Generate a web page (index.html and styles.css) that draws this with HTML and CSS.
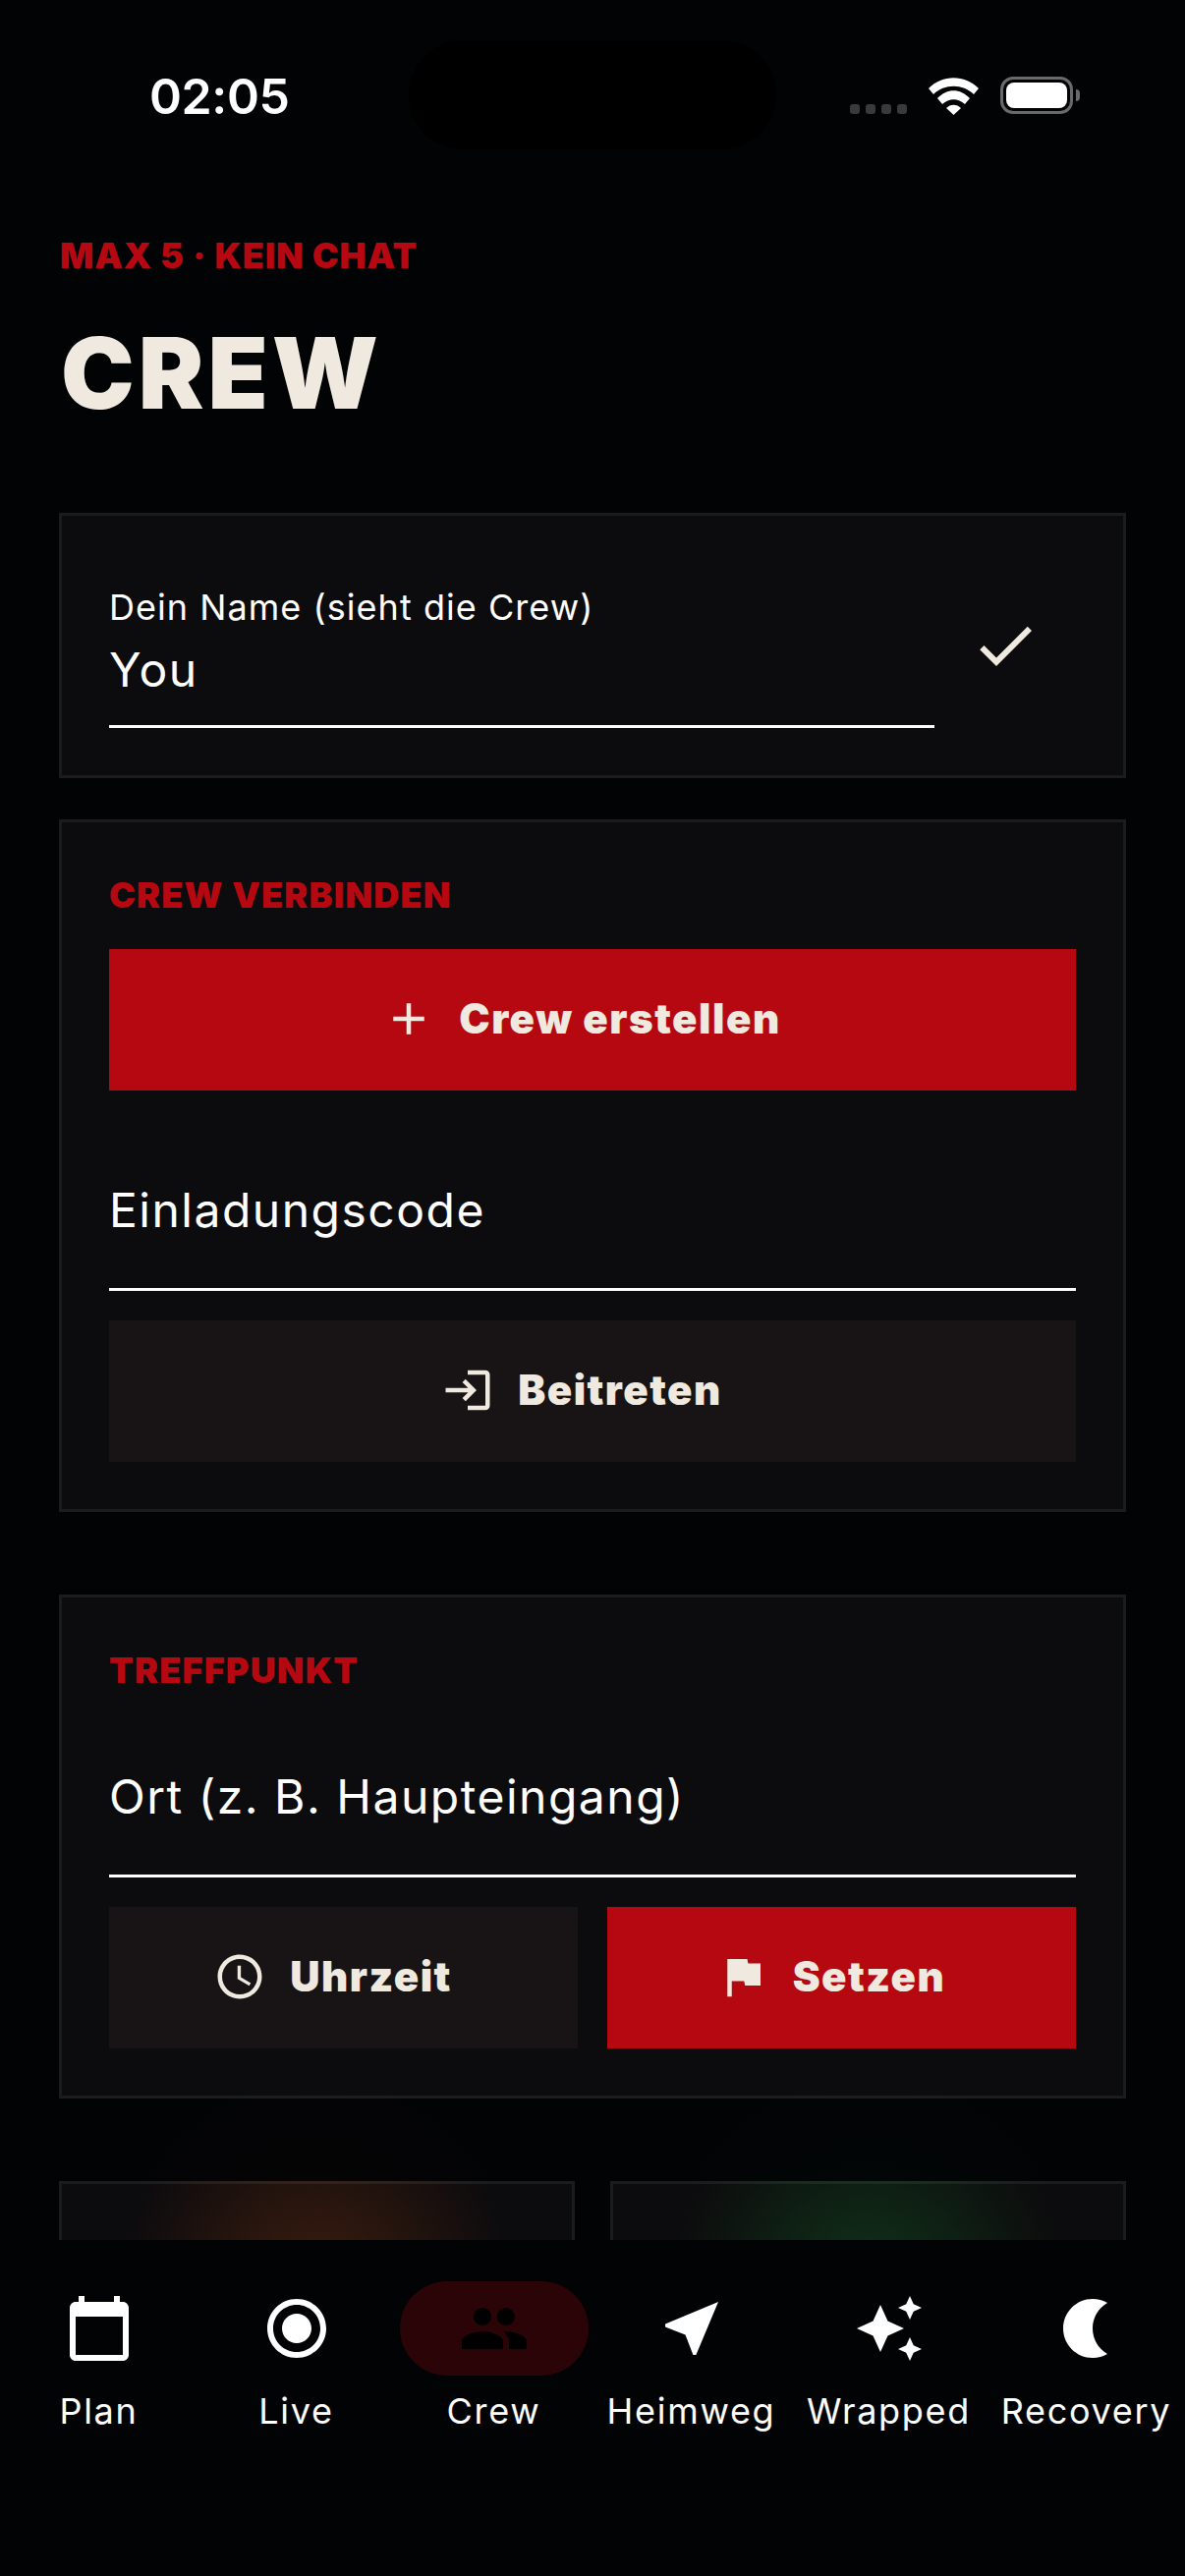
FILE: index.html
```html
<!DOCTYPE html>
<html lang="de">
<head>
    <meta charset="UTF-8">
    <meta name="viewport" content="width=device-width, initial-scale=1.0">
    <title>Crew</title>
    <link rel="stylesheet" href="styles.css">
</head>
<body>
    <div class="status-bar">
        <div class="status-time">02:05</div>
        <div class="status-island"></div>
        <div class="status-icons">
            <div class="signal"><span></span><span></span><span></span><span></span></div>
            <svg class="wifi" width="51" height="38" viewBox="0 0 51 38">
                <path d="M0 11C14-3.5 37-3.5 51 11L46 17C35 6 16 6 5 17Z"/>
                <path d="M9 21C19 10.500 32 10.500 42 21L37 27C30 20.500 21 20.500 14 27Z"/>
                <path d="M18 31C22 26.500 29 26.500 33 31L25.500 38Z"/>
            </svg>
            <div class="battery"><div class="battery-fill"></div></div>
            <div class="battery-tip"></div>
        </div>
    </div>

    <main class="content">
        <header class="page-header">
            <div class="eyebrow">MAX 5 · KEIN CHAT</div>
            <h1>CREW</h1>
        </header>

        <section class="card name-card">
            <div class="field field-filled">
                <label>Dein Name (sieht die Crew)</label>
                <div class="field-value">You</div>
            </div>
            <div class="icon-button">
                <svg width="72" height="72" viewBox="0 0 24 24"><path d="M9 16.170L4.830 12l-1.420 1.410L9 19 21 7l-1.410-1.410z"/></svg>
            </div>
        </section>

        <section class="card connect-card">
            <div class="card-title">CREW VERBINDEN</div>
            <button class="btn btn-primary">
                <svg width="54" height="54" viewBox="0 0 24 24"><path d="M19 13h-6v6h-2v-6H5v-2h6V5h2v6h6v2z"/></svg>
                Crew erstellen
            </button>
            <div class="field invite-field">
                <div class="field-value">Einladungscode</div>
            </div>
            <button class="btn btn-dark">
                <svg width="54" height="54" viewBox="0 0 24 24"><path d="M11 7L9.600 8.400l2.600 2.600H2v2h10.200l-2.600 2.600L11 17l5-5-5-5zm9 12h-8v2h8c1.100 0 2-.9 2-2V5c0-1.100-.9-2-2-2h-8v2h8v14z"/></svg>
                Beitreten
            </button>
        </section>

        <section class="card meet-card">
            <div class="card-title">TREFFPUNKT</div>
            <div class="field">
                <div class="field-value">Ort (z. B. Haupteingang)</div>
            </div>
            <div class="btn-row">
                <button class="btn btn-dark">
                    <svg width="54" height="54" viewBox="0 0 24 24"><path d="M11.990 2C6.470 2 2 6.480 2 12s4.470 10 9.990 10C17.520 22 22 17.520 22 12S17.520 2 11.990 2zM12 20c-4.420 0-8-3.580-8-8s3.580-8 8-8 8 3.580 8 8-3.580 8-8 8zm.5-13H11v6l5.250 3.150.75-1.230-4.500-2.670z"/></svg>
                    Uhrzeit
                </button>
                <button class="btn btn-primary">
                    <svg width="54" height="54" viewBox="0 0 24 24"><path d="M14.400 6L14 4H5v17h2v-7h5.600l.4 2h7V6z"/></svg>
                    Setzen
                </button>
            </div>
        </section>

        <div class="stat-row">
            <div class="card stat-card glow-orange"></div>
            <div class="card stat-card glow-green"></div>
        </div>
    </main>

    <nav class="tabs">
        <div class="tab">
            <div class="tab-icon"><svg width="72" height="72" viewBox="0 0 24 24"><path d="M20 3h-1V1h-2v2H7V1H5v2H4c-1.100 0-2 .9-2 2v16c0 1.100.9 2 2 2h16c1.100 0 2-.9 2-2V5c0-1.100-.9-2-2-2zm0 18H4V8h16v13z"/></svg></div>
            <span>Plan</span>
        </div>
        <div class="tab">
            <div class="tab-icon"><svg width="72" height="72" viewBox="0 0 24 24"><path d="M12 7c-2.760 0-5 2.240-5 5s2.240 5 5 5 5-2.240 5-5-2.240-5-5-5zm0-5C6.480 2 2 6.480 2 12s4.480 10 10 10 10-4.480 10-10S17.520 2 12 2zm0 18c-4.420 0-8-3.580-8-8s3.580-8 8-8 8 3.580 8 8-3.580 8-8 8z"/></svg></div>
            <span>Live</span>
        </div>
        <div class="tab active">
            <div class="tab-icon"><svg width="72" height="72" viewBox="0 0 24 24"><path d="M16 11c1.660 0 2.990-1.340 2.990-3S17.660 5 16 5c-1.660 0-3 1.340-3 3s1.340 3 3 3zm-8 0c1.660 0 2.990-1.340 2.990-3S9.660 5 8 5C6.340 5 5 6.340 5 8s1.340 3 3 3zm0 2c-2.330 0-7 1.170-7 3.500V19h14v-2.500c0-2.330-4.670-3.500-7-3.500zm8 0c-.29 0-.62.020-.97.050 1.160.84 1.970 1.970 1.970 3.450V19h6v-2.500c0-2.330-4.670-3.500-7-3.500z"/></svg></div>
            <span>Crew</span>
        </div>
        <div class="tab">
            <div class="tab-icon"><svg width="72" height="72" viewBox="0 0 24 24"><path d="M21 3L3 10.530v.98l6.840 2.650L12.480 21h.98L21 3z"/></svg></div>
            <span>Heimweg</span>
        </div>
        <div class="tab">
            <div class="tab-icon"><svg width="72" height="72" viewBox="0 0 24 24"><path d="M19 9l1.250-2.750L23 5l-2.750-1.250L19 1l-1.250 2.750L15 5l2.750 1.250L19 9zm-7.500.5L9 4 6.500 9.500 1 12l5.500 2.500L9 20l2.500-5.500L17 12l-5.500-2.500zM19 15l-1.250 2.750L15 19l2.750 1.250L19 23l1.250-2.750L23 19l-2.750-1.250L19 15z"/></svg></div>
            <span>Wrapped</span>
        </div>
        <div class="tab">
            <div class="tab-icon"><svg width="72" height="72" viewBox="0 0 24 24"><path d="M14 2c1.820 0 3.530.5 5 1.350C16.010 5.080 14 8.300 14 12s2.010 6.920 5 8.650C17.530 21.500 15.820 22 14 22 8.480 22 4 17.520 4 12S8.480 2 14 2z"/></svg></div>
            <span>Recovery</span>
        </div>
    </nav>
</body>
</html>
```
FILE: styles.css
```css
:root {
    --bg: #020305;
    --card-bg: #0c0b0d;
    --card-border: #1c1c1e;
    --dark-btn: #181315;
    --red: #b50811;
    --cream: #efe9df;
    --pill: #2b0408;
}

* {
    margin: 0;
    padding: 0;
    box-sizing: border-box;
}

body {
    width: 1206px;
    height: 2622px;
    overflow: hidden;
    background-color: var(--bg);
    color: white;
    font-family: Inter, "Liberation Sans", sans-serif;
}

/* status bar */
.status-bar {
    display: flex;
    height: 200px;
    padding-top: 41px;
}

.status-time {
    width: 416px;
    padding-left: 152px;
    padding-top: 27px;
    font-size: 50px;
    line-height: 60px;
    font-weight: 600;
    letter-spacing: -0.4px;
}

.status-island {
    width: 374px;
    height: 111px;
    background-color: #000;
    border-radius: 56px;
}

.status-icons {
    display: flex;
    align-items: flex-start;
    margin-left: 75px;
    padding-top: 37px;
}

.signal {
    display: flex;
    gap: 6px;
    margin-top: 28px;
}

.signal span {
    width: 10px;
    height: 10px;
    border-radius: 3px;
    background-color: #3a3a3c;
}

.wifi {
    margin-left: 22px;
    margin-top: 1px;
    fill: white;
}

.battery {
    width: 74px;
    height: 38px;
    margin-left: 22px;
    padding: 3px;
    border: 3px solid #6a6a6c;
    border-radius: 13px;
}

.battery-fill {
    height: 100%;
    background-color: white;
    border-radius: 8px;
}

.battery-tip {
    width: 4px;
    height: 12px;
    margin-left: 3px;
    margin-top: 13px;
    background-color: #6a6a6c;
    border-radius: 0 4px 4px 0;
}

/* content */
.content {
    height: 2080px;
    padding: 34px 60px 0;
    overflow: hidden;
}

.page-header {
    height: 288px;
}

.eyebrow {
    font-size: 36px;
    line-height: 52px;
    font-weight: 900;
    color: var(--red);
    letter-spacing: 0.9px;
    padding-left: 1px;
}

h1 {
    margin-top: 34px;
    font-size: 100px;
    line-height: 120px;
    font-weight: 900;
    color: var(--cream);
    letter-spacing: 4px;
    padding-left: 2px;
}

.card {
    background-color: var(--card-bg);
    border: 3px solid var(--card-border);
    padding: 48px;
}

.name-card {
    display: flex;
    margin-bottom: 42px;
}

.connect-card {
    margin-bottom: 84px;
}

.meet-card {
    margin-bottom: 84px;
}

.card-title {
    font-size: 36px;
    line-height: 52px;
    font-weight: 900;
    color: var(--red);
    letter-spacing: 1.2px;
}

.connect-card .card-title {
    margin-bottom: 29px;
}

.meet-card .card-title {
    margin-bottom: 17px;
}

.field {
    display: flex;
    flex-direction: column;
    justify-content: center;
    height: 168px;
    padding-top: 6px;
    border-bottom: 3px solid white;
}

.field-value {
    font-size: 48px;
    line-height: 60px;
    letter-spacing: 1.5px;
}

.field-filled {
    flex: 1;
    justify-content: flex-start;
    padding-top: 21px;
}

.field-filled label {
    font-size: 36px;
    line-height: 48px;
    letter-spacing: 1.05px;
    margin-bottom: 10px;
}

.invite-field {
    margin-top: 36px;
}

.icon-button {
    display: flex;
    align-items: center;
    justify-content: center;
    width: 144px;
    height: 168px;
}

.icon-button svg {
    fill: var(--cream);
}

.btn {
    display: flex;
    align-items: center;
    justify-content: center;
    gap: 24px;
    width: 100%;
    height: 144px;
    padding: 0 22px 3px 0;
    border: none;
    font-family: inherit;
    font-size: 42px;
    font-weight: 900;
    letter-spacing: 1.5px;
    color: var(--cream);
}

.btn svg {
    fill: var(--cream);
}

.btn-primary {
    background-color: var(--red);
}

.btn-dark {
    background-color: var(--dark-btn);
}

.connect-card .btn-dark {
    margin-top: 30px;
}

.btn-row {
    display: flex;
    gap: 30px;
    margin-top: 30px;
}

.stat-row {
    display: flex;
    gap: 36px;
}

.stat-card {
    position: relative;
    flex: 1;
    height: 200px;
}

/* tint inside the card, including its border */
.stat-card::before {
    content: "";
    position: absolute;
    inset: -3px;
}

/* fainter glow that spills past the edges */
.stat-card::after {
    content: "";
    position: absolute;
    left: 50%;
    top: 50%;
    width: 440px;
    height: 440px;
    transform: translate(-50%, -50%);
    border-radius: 50%;
}

.glow-orange::before {
    background: radial-gradient(circle 200px at 50% 110px, rgba(230, 90, 20, 0.2), transparent);
}

.glow-green::before {
    background: radial-gradient(circle 200px at 50% 110px, rgba(30, 190, 70, 0.2), transparent);
}

.glow-orange::after {
    background: radial-gradient(circle, rgba(230, 90, 20, 0.03), transparent 70%);
}

.glow-green::after {
    background: radial-gradient(circle, rgba(30, 190, 70, 0.03), transparent 70%);
}

/* bottom tabs */
.tabs {
    display: grid;
    grid-template-columns: repeat(6, 1fr);
    padding-top: 42px;
}

.tab {
    display: flex;
    flex-direction: column;
    align-items: center;
    font-size: 36px;
    line-height: 48px;
    letter-spacing: 1.7px;
}

.tab-icon {
    display: flex;
    align-items: center;
    justify-content: center;
    width: 192px;
    height: 96px;
    margin-bottom: 12px;
    border-radius: 48px;
}

.tab-icon svg {
    fill: white;
}

.tab.active .tab-icon {
    background-color: var(--pill);
}

.tab.active .tab-icon svg {
    fill: #000;
}
```
